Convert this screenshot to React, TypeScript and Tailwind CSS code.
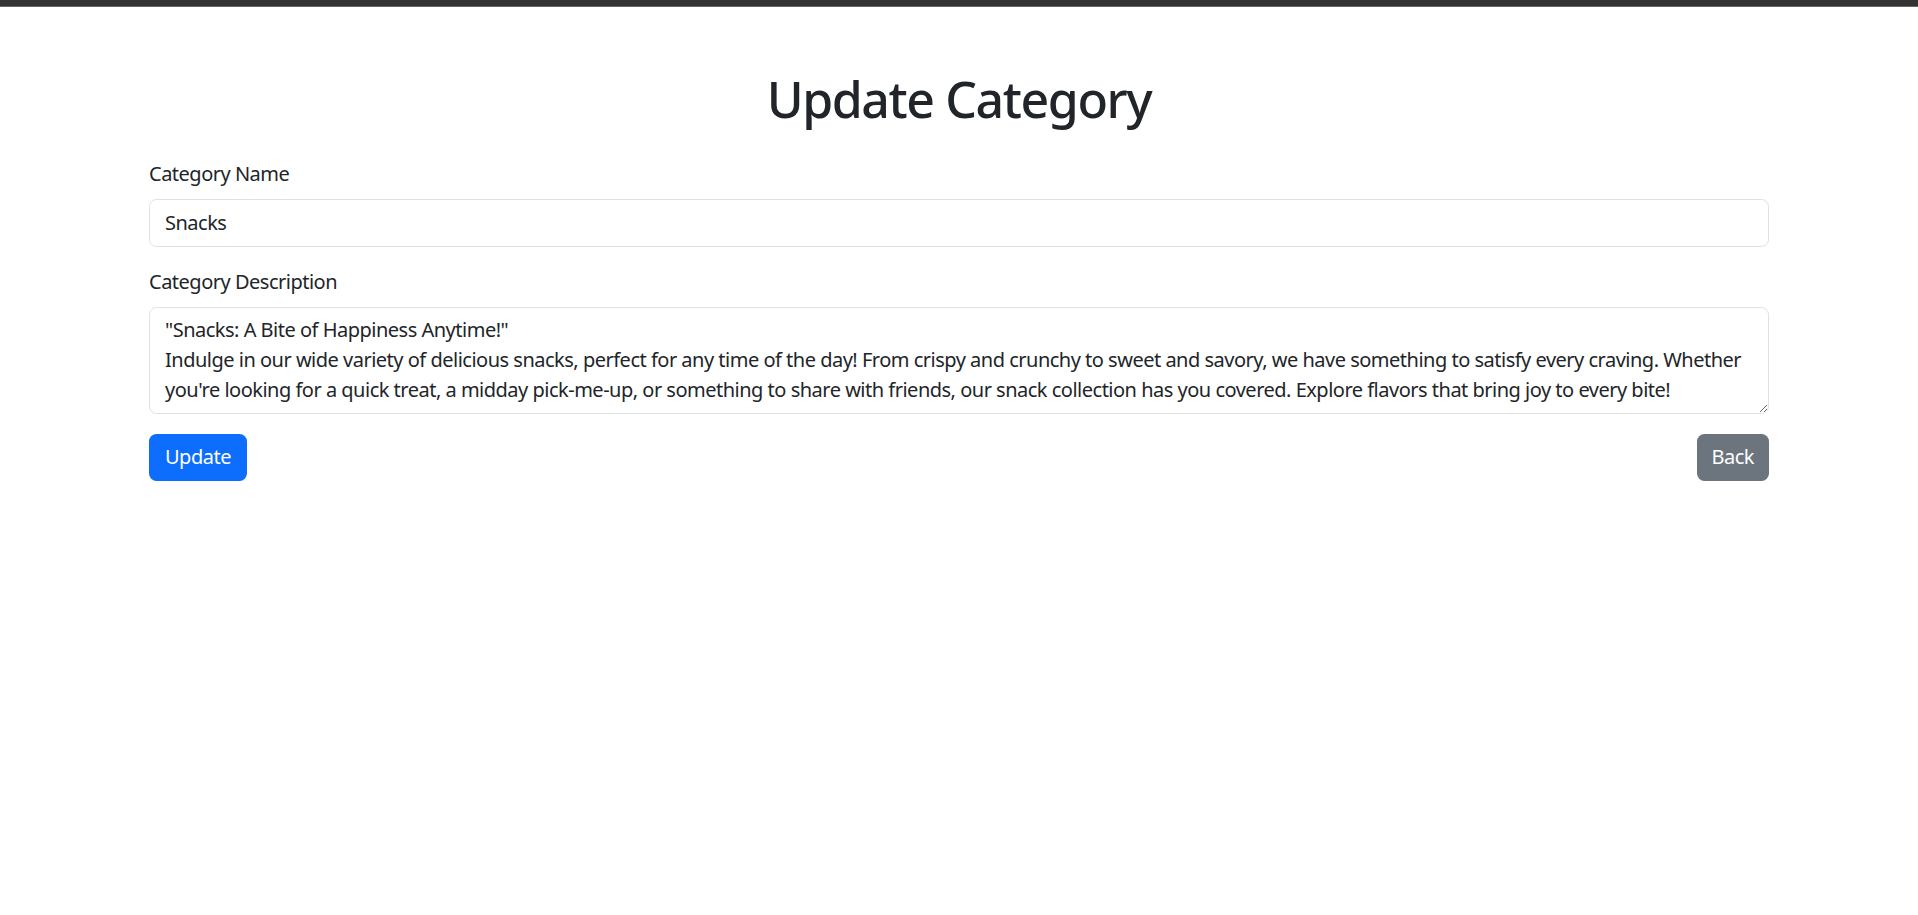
import React, { useState } from 'react';

const initialDescription =
  '"Snacks: A Bite of Happiness Anytime!"\nIndulge in our wide variety of delicious snacks, perfect for any time of the day! From crispy and crunchy to sweet and savory, we have something to satisfy every craving. Whether you\'re looking for a quick treat, a midday pick-me-up, or something to share with friends, our snack collection has you covered. Explore flavors that bring joy to every bite!';

export default function App() {
  const [name, setName] = useState('Snacks');
  const [description, setDescription] = useState(initialDescription);

  return (
    <div className="min-h-screen bg-white text-[#212529] font-['Segoe_UI','Noto_Sans',sans-serif] tracking-[-0.5px]">
      <div className="h-[7px] bg-[#333333] border-b border-[#666666]" />

      <div className="w-[1620px] mx-auto">
        <h1 className="mt-[62px] text-center text-[50px] leading-[60px] font-medium tracking-[-1.4px]">Update Category</h1>

        <form className="mt-[30px]" onSubmit={(e) => e.preventDefault()}>
          <div className="mb-5">
            <label className="block mb-[10px] text-[20px] leading-[30px]">Category Name</label>
            <input
              type="text"
              value={name}
              onChange={(e) => setName(e.target.value)}
              className="block w-full h-[47.5px] px-[15px] text-[20px] leading-[30px] tracking-[-0.5px] border-[1.25px] border-[#dee2e6] rounded-[7.5px] outline-none"
            />
          </div>

          <div className="mb-5">
            <label className="block mb-[10px] text-[20px] leading-[30px]">Category Description</label>
            <textarea
              rows={3}
              value={description}
              onChange={(e) => setDescription(e.target.value)}
              className="block w-full px-[15px] py-[7.5px] text-[20px] leading-[30px] tracking-[-0.5px] border-[1.25px] border-[#dee2e6] rounded-[7.5px] outline-none"
            />
          </div>

          <div className="flex justify-between items-center">
            <button type="submit" className="h-[47.5px] px-[16px] text-[20px] leading-[30px] tracking-[-0.5px] text-white bg-[#0d6efd] rounded-[7.5px]">
              Update
            </button>
            <button type="button" className="h-[47.5px] px-[15px] text-[20px] leading-[30px] tracking-[-0.5px] text-white bg-[#6c757d] rounded-[7.5px]">
              Back
            </button>
          </div>
        </form>
      </div>
    </div>
  );
}
